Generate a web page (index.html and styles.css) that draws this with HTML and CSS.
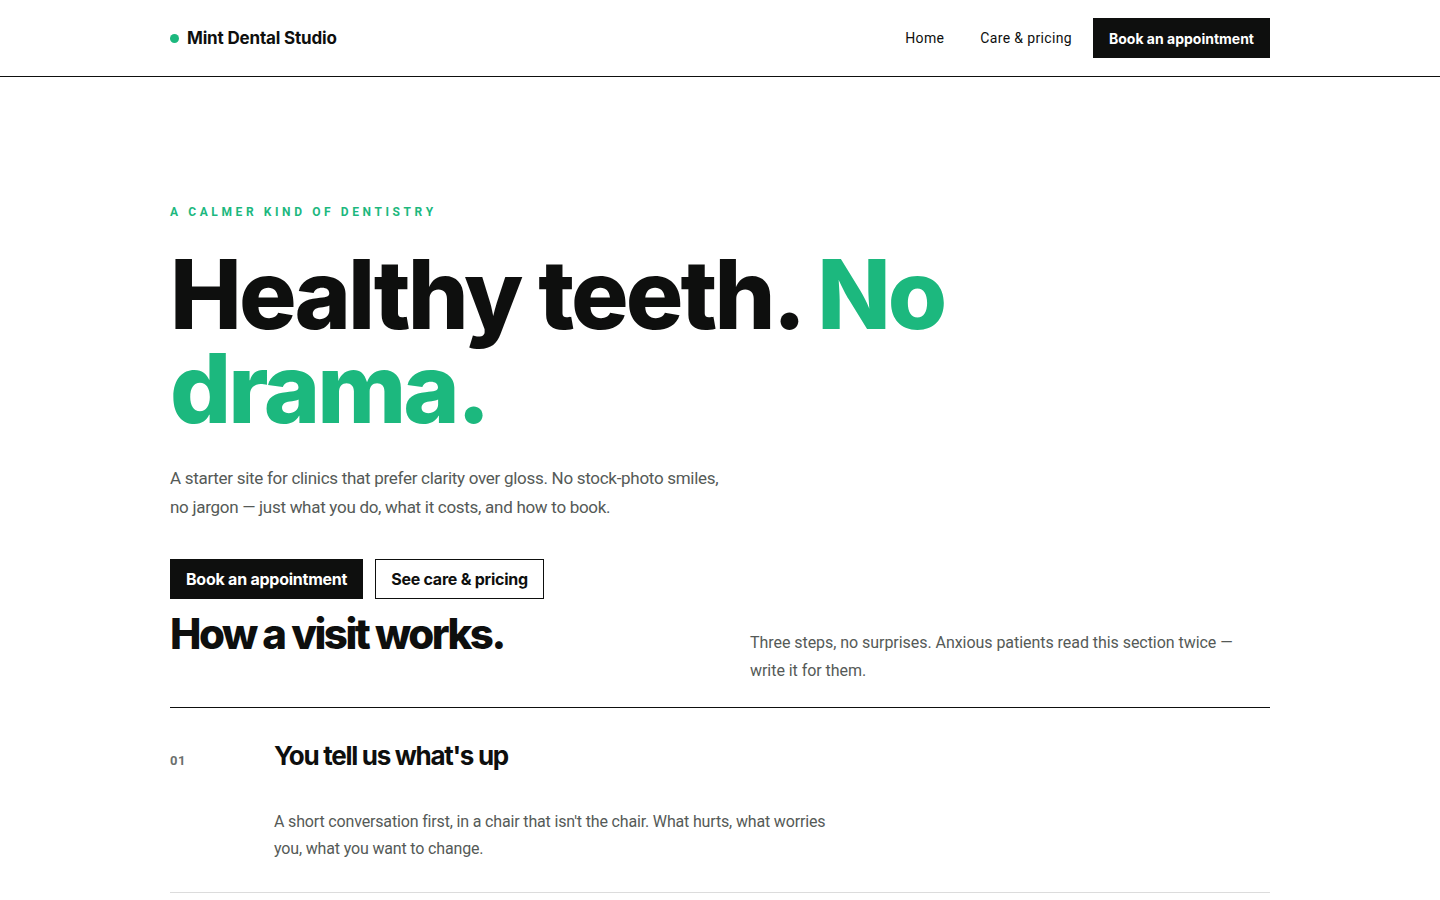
FILE: index.html
```html
<!DOCTYPE html>
<html lang="en">
<head>
  <meta charset="UTF-8">
  <meta name="viewport" content="width=device-width, initial-scale=1.0">
  <title>Mint Dental Studio</title>
  <link rel="stylesheet" href="styles.css">
</head>
<body>
  <header class="site-header">
    <div class="wrap header-row">
      <a class="brand" href="#"><span class="brand-dot"></span>Mint Dental Studio</a>
      <nav class="nav">
        <a href="#">Home</a>
        <a href="#">Care &amp; pricing</a>
        <a class="btn btn-dark btn-nav" href="#">Book an appointment</a>
      </nav>
    </div>
  </header>

  <main>
    <section class="hero wrap">
      <p class="eyebrow">A calmer kind of dentistry</p>
      <h1 class="hero-title">Healthy teeth. <span class="accent">No drama.</span></h1>
      <p class="hero-lead">A starter site for clinics that prefer clarity over gloss. No stock-photo smiles, no jargon — just what you do, what it costs, and how to book.</p>
      <div class="hero-actions">
        <a class="btn btn-dark" href="#">Book an appointment</a>
        <a class="btn btn-outline" href="#">See care &amp; pricing</a>
      </div>
    </section>

    <section class="steps wrap">
      <div class="steps-head">
        <h2>How a visit works.</h2>
        <p>Three steps, no surprises. Anxious patients read this section twice — write it for them.</p>
      </div>
      <ol class="step-list">
        <li class="step">
          <span class="step-num">01</span>
          <div class="step-body">
            <h3>You tell us what's up</h3>
            <p>A short conversation first, in a chair that isn't the chair. What hurts, what worries you, what you want to change.</p>
          </div>
        </li>
      </ol>
    </section>
  </main>
</body>
</html>
```

FILE: styles.css
```css
* {
  box-sizing: border-box;
}

body {
  margin: 0;
  font-family: 'Roboto', 'Liberation Sans', sans-serif;
  color: #0e0f0e;
  background: #fff;
}

a {
  color: inherit;
  text-decoration: none;
}

.wrap {
  width: 1100px;
  margin: 0 auto;
}

/* header */
.site-header {
  border-bottom: 1px solid #0e0f0e;
}

.header-row {
  height: 76px;
  display: flex;
  align-items: center;
  justify-content: space-between;
}

.brand {
  display: flex;
  align-items: center;
  gap: 8px;
  font-family: 'Inter', sans-serif;
  font-size: 17px;
  font-weight: 700;
  letter-spacing: -0.01em;
}

.brand-dot {
  width: 9px;
  height: 9px;
  border-radius: 50%;
  background: #1cb87e;
}

.nav {
  display: flex;
  align-items: center;
  gap: 36px;
  font-size: 14px;
  letter-spacing: 0.025em;
}

.btn {
  display: inline-flex;
  align-items: center;
  height: 40px;
  padding: 0 16px;
  font-family: 'Inter', sans-serif;
  font-size: 16px;
  font-weight: 700;
  letter-spacing: -0.015em;
}

.btn-dark {
  background: #0e0f0e;
  color: #fff;
}

.btn-outline {
  border: 1px solid #0e0f0e;
  padding: 0 15px;
}

.nav .btn-nav {
  font-size: 14px;
  letter-spacing: 0;
  margin-left: -15px;
}

/* hero */
.hero {
  padding-top: 128px;
}

.eyebrow {
  margin: 0;
  font-size: 12px;
  font-weight: 700;
  letter-spacing: 0.3em;
  text-transform: uppercase;
  color: #1cb87e;
}

.hero-title {
  margin: 28px 0 0;
  max-width: 800px;
  font-family: 'Inter', sans-serif;
  font-size: 96px;
  line-height: 94px;
  font-weight: 800;
  letter-spacing: -0.031em;
}

.accent {
  color: #1cb87e;
}

.hero-lead {
  margin: 29px 0 0;
  max-width: 560px;
  font-size: 17px;
  line-height: 29px;
  color: #555a57;
  letter-spacing: -0.017em;
}

.hero-actions {
  display: flex;
  gap: 12px;
  margin-top: 37px;
}

/* steps */
.steps-head {
  display: grid;
  grid-template-columns: 1fr 1fr;
  gap: 40px;
  padding-bottom: 22px;
  border-bottom: 1px solid #0e0f0e;
}

.steps-head h2 {
  margin: 12px 0 0;
  font-family: 'Inter', sans-serif;
  font-size: 42px;
  line-height: 1.1;
  font-weight: 800;
  letter-spacing: -0.06em;
}

.steps-head p {
  margin: 30px 0 0 10px;
  font-size: 16px;
  line-height: 28px;
  color: #555a57;
  max-width: 500px;
  letter-spacing: -0.003em;
}

.step-list {
  list-style: none;
  margin: 0;
  padding: 0;
}

.step {
  display: grid;
  grid-template-columns: 104px 1fr;
  padding: 31px 0 30px;
  border-bottom: 1px solid #dcdcdc;
}

.step-num {
  padding-top: 14px;
  font-size: 13px;
  font-weight: 700;
  color: #6b706d;
  letter-spacing: 0.04em;
}

.step-body h3 {
  margin: 0;
  font-family: 'Inter', sans-serif;
  font-size: 26px;
  line-height: 34px;
  font-weight: 700;
  letter-spacing: -0.05em;
}

.step-body p {
  margin: 35px 0 0;
  max-width: 560px;
  font-size: 16px;
  line-height: 27px;
  color: #555a57;
  letter-spacing: -0.01em;
}
```
